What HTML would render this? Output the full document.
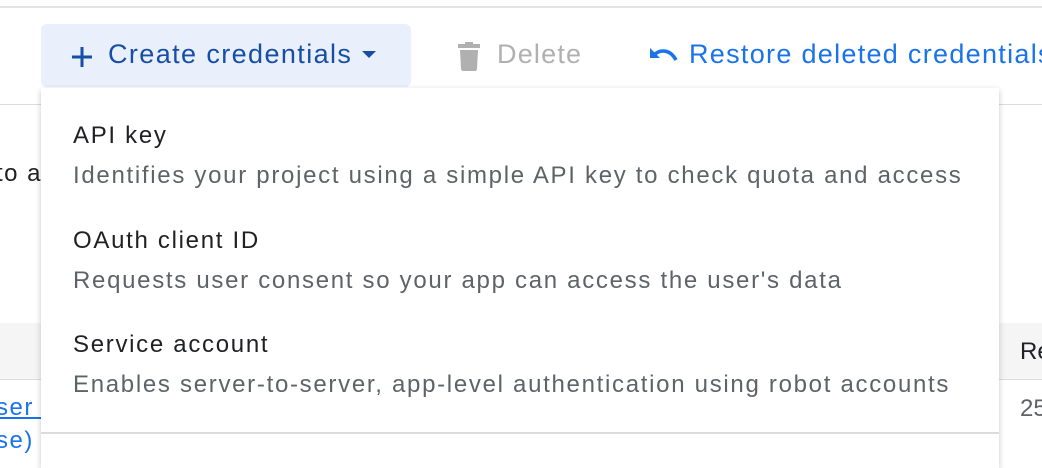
<!DOCTYPE html>
<html><head><meta charset="utf-8"><style>
*{margin:0;padding:0;box-sizing:border-box}
body{width:1042px;height:452px;overflow:hidden;background:#fff;font-family:"Liberation Sans",Arial,sans-serif;position:relative}
.abs{position:absolute;white-space:nowrap}
.m{letter-spacing:1.7px}
</style></head><body>
<div class="abs" style="left:0;top:6px;width:1042px;height:2px;background:#e3e3e6"></div>
<div class="abs" style="left:0;top:104px;width:1042px;height:1px;background:#dadce0"></div>
<div class="abs" style="left:0;top:323px;width:1042px;height:57px;background:#f5f5f6;border-bottom:1px solid #dadce0"></div>
<div class="abs" style="left:-4px;top:160px;font-size:24px;color:#202124;letter-spacing:1.5px">to a</div>
<div class="abs" style="left:-4px;top:394px;font-size:24px;color:#1a73e8;text-decoration:underline;letter-spacing:1.5px">ser k</div>
<div class="abs" style="left:-4px;top:427px;font-size:24px;color:#1a73e8;letter-spacing:1.5px">se)</div>
<div class="abs" style="left:1020px;top:338px;font-size:24px;color:#202124">Re</div>
<div class="abs" style="left:1020px;top:395px;font-size:24px;color:#5f6368">25</div>

<div class="abs" style="left:41px;top:24px;width:370px;height:63px;background:#e9f0fc;border-radius:6px"></div>
<svg class="abs" style="left:68px;top:43px" width="28" height="28" viewBox="0 0 28 28"><path d="M14 4v20M4 14h20" stroke="#174ea6" stroke-width="3"/></svg>
<div class="abs" style="left:108px;top:39px;font-size:27px;color:#174ea6;letter-spacing:1.4px">Create credentials</div>
<svg class="abs" style="left:361px;top:50px" width="16" height="10"><path d="M1 1h14L8 8z" fill="#174ea6"/></svg>
<svg class="abs" style="left:456px;top:41px" width="26" height="30" viewBox="0 0 26 30"><rect x="2" y="3" width="22" height="4" fill="#b0b0b0"/><rect x="9" y="1" width="8" height="3" fill="#b0b0b0"/><path d="M4 9h18l-1 19c0 1-1 2-2 2H7c-1 0-2-1-2-2z" fill="#b0b0b0"/></svg>
<div class="abs" style="left:497px;top:39px;font-size:27px;color:#b0b0b0;letter-spacing:1.2px">Delete</div>
<svg class="abs" style="left:648px;top:44px" width="32" height="24" viewBox="0 0 32 24"><path d="M2 4v10h10z" fill="#1a73e8"/><path d="M6 11c6-6 16-6 22 5" stroke="#1a73e8" stroke-width="3.5" fill="none"/></svg>
<div class="abs" style="left:689px;top:39px;font-size:27px;color:#1a73e8;letter-spacing:1.3px">Restore deleted credentials</div>

<div class="abs" style="left:41px;top:88px;width:958px;height:380px;background:#fff;box-shadow:0 2px 6px rgba(0,0,0,.22)">
  <div class="abs m" style="left:32px;top:34px;font-size:24px;color:#202124">API key</div>
  <div class="abs m" style="left:32px;top:74px;font-size:24px;color:#5f6368">Identifies your project using a simple API key to check quota and access</div>
  <div class="abs m" style="left:32px;top:139px;font-size:24px;color:#202124">OAuth client ID</div>
  <div class="abs m" style="left:32px;top:179px;font-size:24px;color:#5f6368">Requests user consent so your app can access the user's data</div>
  <div class="abs m" style="left:32px;top:243px;font-size:24px;color:#202124">Service account</div>
  <div class="abs m" style="left:32px;top:283px;font-size:24px;color:#5f6368">Enables server-to-server, app-level authentication using robot accounts</div>
  <div class="abs" style="left:0;top:344px;width:958px;height:2px;background:#dadce0"></div>
</div>
</body></html>
